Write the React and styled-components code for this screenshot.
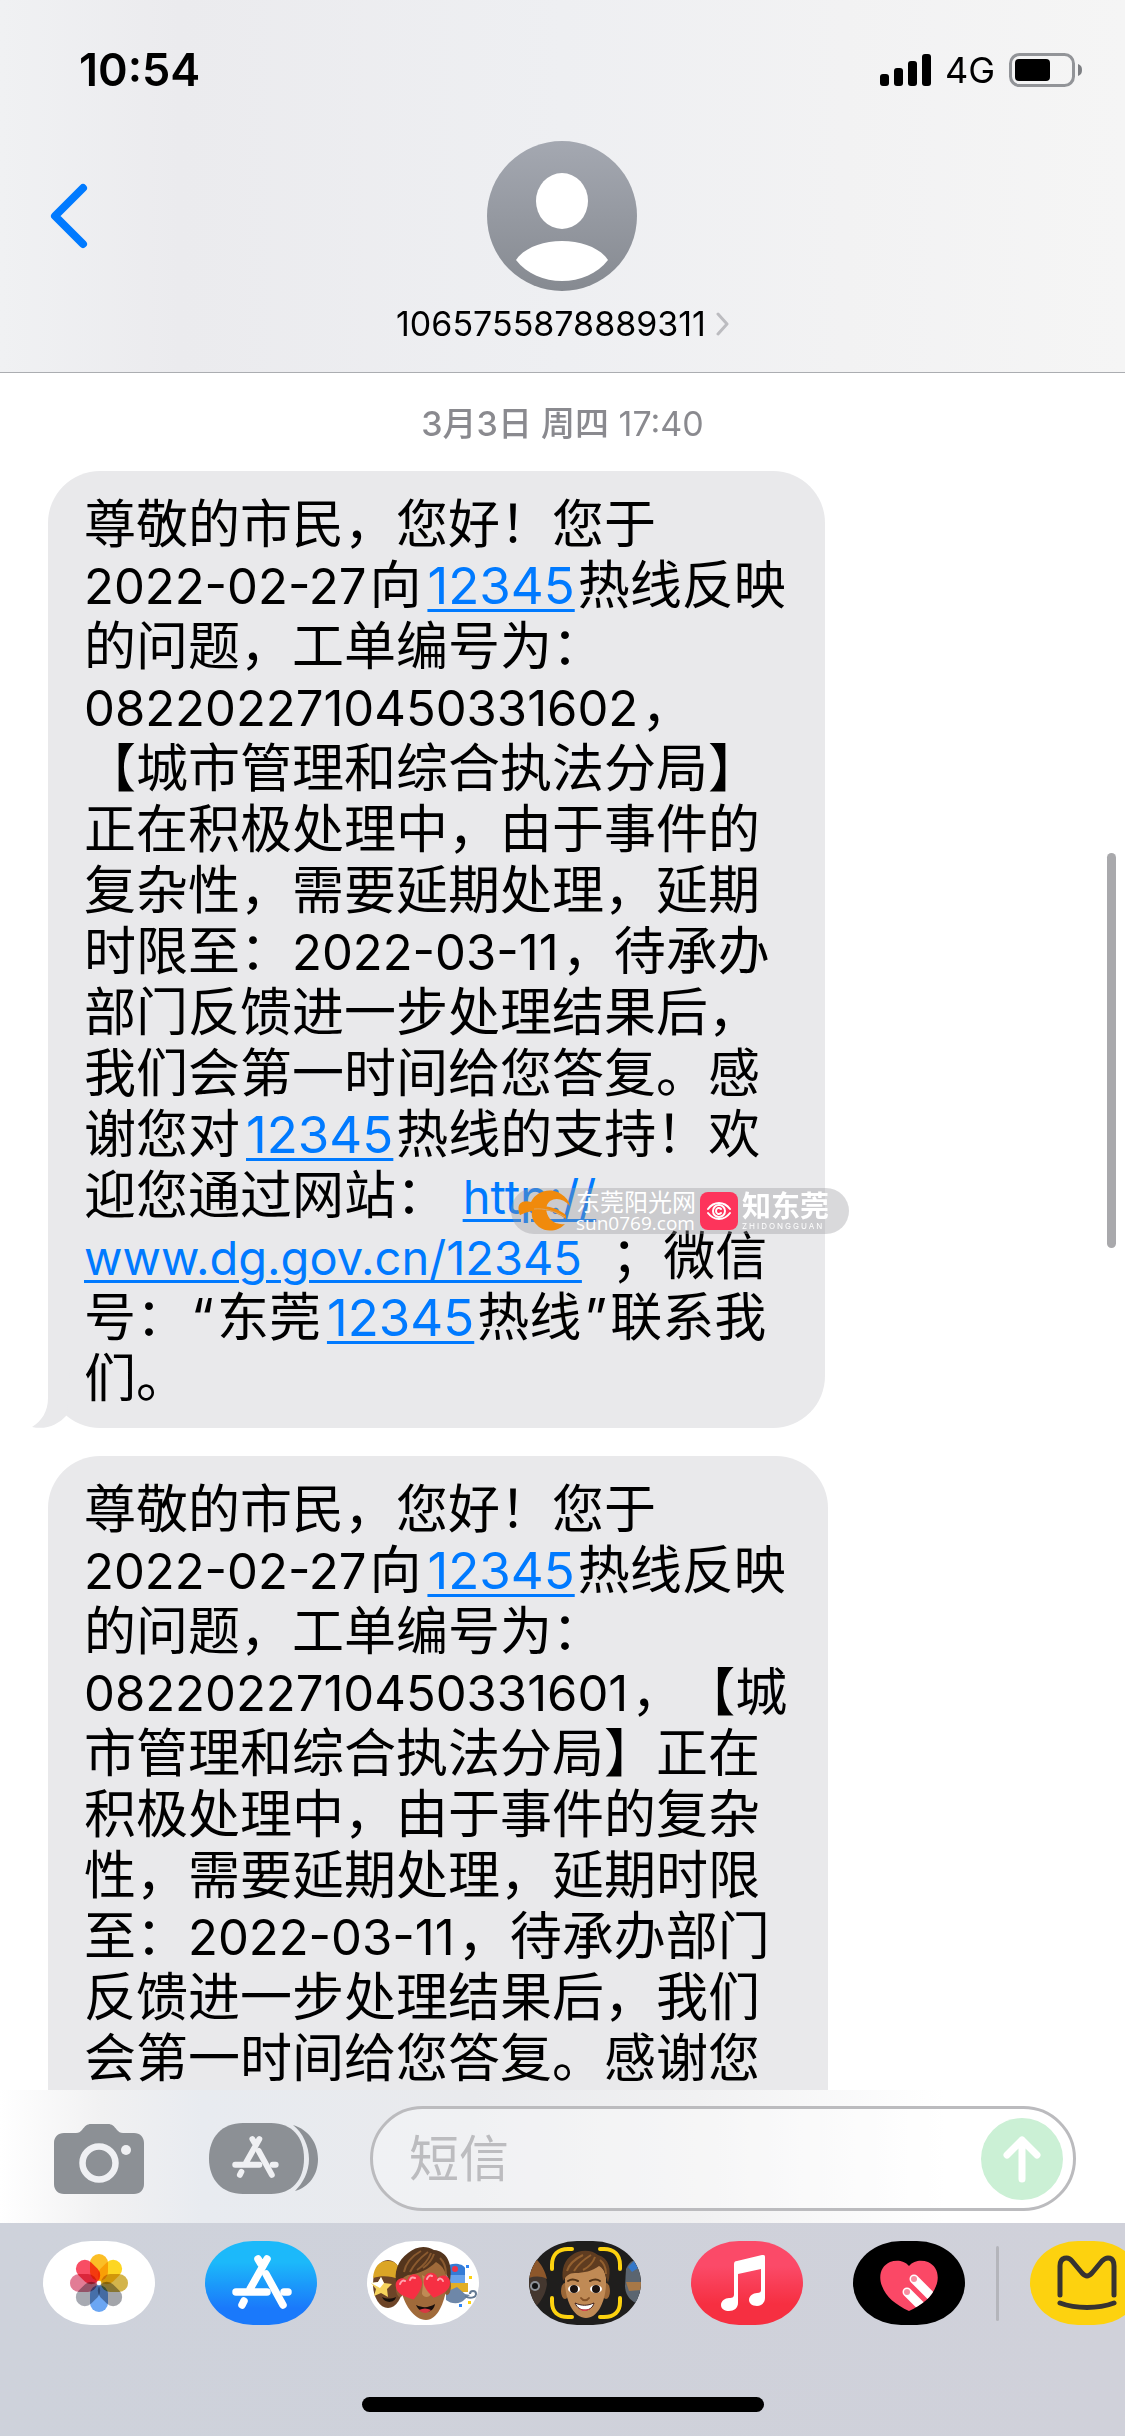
import React from 'react'
import styled, { createGlobalStyle } from 'styled-components'

const LINK = 'http://www.dg.gov.cn/12345'

const App = () => {
    return (
        <Page>
            <GlobalStyle />
            <Header>
                <StatusBar>
                    <Clock>10:54</Clock>
                    <StatusIcons>
                        <SignalIcon />
                        <Network>4G</Network>
                        <BatteryIcon />
                    </StatusIcons>
                </StatusBar>
                <NavBar>
                    <BackButton aria-label="返回">
                        <svg width="38" height="66" viewBox="0 0 38 66" fill="none" stroke="#007aff" strokeWidth="8" strokeLinecap="round" strokeLinejoin="round">
                            <path d="M33 5 5 33l28 28" />
                        </svg>
                    </BackButton>
                    <Contact>
                        <Avatar />
                        <ContactName>
                            1065755878889311
                            <svg width="13" height="24" viewBox="0 0 13 24" fill="none" stroke="#bcbcc0" strokeWidth="3" strokeLinecap="round" strokeLinejoin="round">
                                <path d="m2 2 9 10-9 10" />
                            </svg>
                        </ContactName>
                    </Contact>
                </NavBar>
            </Header>

            <Thread>
                <DateLine><strong>3月3日 周四</strong> 17:40</DateLine>
                <Bubble>
                    尊敬的市民，您好！您于<br />
                    <Latin>2022-02-27</Latin>向<HotLine href="tel:12345">12345</HotLine>热线反映<br />
                    的问题，工单编号为：<br />
                    <Latin>0822022710450331602</Latin>，<br />
                    【城市管理和综合执法分局】<br />
                    正在积极处理中，由于事件的<br />
                    复杂性，需要延期处理，延期<br />
                    时限至：<Latin>2022-03-11</Latin>，待承办<br />
                    部门反馈进一步处理结果后，<br />
                    我们会第一时间给您答复。感<br />
                    谢您对<HotLine href="tel:12345">12345</HotLine>热线的支持！欢<br />
                    迎您通过网站： <WebLink href={LINK}>http://<br />www.dg.gov.cn/12345</WebLink>&nbsp; ；微信<br />
                    号：<Quote>“</Quote>东莞<HotLine href="tel:12345">12345</HotLine>热线<Quote>”</Quote>联系我<br />
                    们。
                    <Tail viewBox="0 0 44 60" aria-hidden="true">
                        <path d="M16 0v30C16 43 10 53 0 59c14 3 26-2 35-12l3-47z" fill="#e9e9eb" />
                    </Tail>
                    <Watermark />
                </Bubble>
                <Bubble $cut>
                    尊敬的市民，您好！您于<br />
                    <Latin>2022-02-27</Latin>向<HotLine href="tel:12345">12345</HotLine>热线反映<br />
                    的问题，工单编号为：<br />
                    <Latin>0822022710450331601</Latin>，【城<br />
                    市管理和综合执法分局】正在<br />
                    积极处理中，由于事件的复杂<br />
                    性，需要延期处理，延期时限<br />
                    至：<Latin>2022-03-11</Latin>，待承办部门<br />
                    反馈进一步处理结果后，我们<br />
                    会第一时间给您答复。感谢您
                </Bubble>
                <ScrollThumb />
            </Thread>

            <Composer>
                <IconButton aria-label="相机"><CameraIcon /></IconButton>
                <IconButton aria-label="应用抽屉"><DrawerIcon /></IconButton>
                <Field>
                    <TextInput type="text" aria-label="短信" placeholder="短信" />
                    <SendButton aria-label="发送">
                        <svg width="40" height="48" viewBox="0 0 40 48" fill="none" stroke="#fff" strokeWidth="7" strokeLinecap="round" strokeLinejoin="round">
                            <path d="M20 44V5M5 20 20 5l15 15" />
                        </svg>
                    </SendButton>
                </Field>
            </Composer>

            <Tray>
                <AppRow>
                    <AppButton aria-label="照片" $bg="#fff"><PhotosArt /></AppButton>
                    <AppButton aria-label="App Store" $bg="linear-gradient(#1cb9fa 25%, #1a79fb 80%)"><StoreArt /></AppButton>
                    <AppButton aria-label="拟我表情贴纸" $bg="#fff"><StickerArt /></AppButton>
                    <AppButton aria-label="拟我表情" $bg="#1f1e1d"><MemojiArt /></AppButton>
                    <AppButton aria-label="音乐" $bg="linear-gradient(#fb4a68 30%, #f62f41 75%)"><MusicArt /></AppButton>
                    <AppButton aria-label="Digital Touch" $bg="#000"><TouchArt /></AppButton>
                    <Divider />
                    <AppButton aria-label="美团" $bg="#fdd20f"><CatArt /></AppButton>
                </AppRow>
                <HomeIndicator />
            </Tray>
        </Page>
    )
}

export default App

/* ---------- drawings ---------- */

const SignalIcon = () => (
    <svg width="51" height="32" viewBox="0 0 51 32" aria-hidden="true">
        <rect x="0" y="20" width="9" height="12" rx="3" />
        <rect x="14" y="14" width="9" height="18" rx="3" />
        <rect x="28" y="7" width="9" height="25" rx="3" />
        <rect x="42" y="0" width="9" height="32" rx="3" />
    </svg>
)

const BatteryIcon = () => (
    <svg width="74" height="34" viewBox="0 0 74 34" aria-hidden="true">
        <rect x="1.5" y="1.5" width="63" height="31" rx="9" fill="none" stroke="#929498" strokeWidth="3" />
        <rect x="6" y="6" width="35" height="22" rx="4" />
        <path d="M69 11c3 1 4 3 4 6s-1 5-4 6z" fill="#7d7f83" />
    </svg>
)

const Avatar = () => (
    <svg width="150" height="150" viewBox="0 0 150 150" aria-hidden="true">
        <defs>
            <linearGradient id="avatar" x1="0" y1="0" x2="0" y2="1">
                <stop offset="0" stopColor="#a4a8b1" />
                <stop offset="1" stopColor="#868a91" />
            </linearGradient>
        </defs>
        <circle cx="75" cy="75" r="75" fill="url(#avatar)" />
        <ellipse cx="75" cy="60" rx="26" ry="28" fill="#fff" />
        <path d="M29 119c8-12 26-19 46-19s38 7 46 19c-11 14-28 21-46 21s-35-7-46-21z" fill="#fff" />
    </svg>
)

const CameraIcon = () => (
    <svg width="90" height="70" viewBox="0 0 90 70" aria-hidden="true">
        <path d="M10 9h12c3 0 4-1 6-3 3-4 5-6 9-6h17c4 0 6 2 9 6 2 2 3 3 6 3h11c6 0 10 4 10 10v41c0 6-4 10-10 10H10C4 70 0 66 0 60V19C0 13 4 9 10 9z" fill="#8c9095" />
        <circle cx="45" cy="39" r="16.5" fill="none" stroke="#eff0f3" strokeWidth="6.5" />
        <circle cx="72" cy="26" r="5" fill="#eff0f3" />
    </svg>
)

const StoreGlyph = ({ color }) => (
    <g fill="none" stroke={color} strokeWidth="7.5" strokeLinecap="round" strokeLinejoin="round">
        <path d="M62 18 45 48M53 18l3 5M31 51h31M39 60l-2 4M79 51h4" />
        <path d="m61 33 17 31" />
    </g>
)

const DrawerIcon = () => (
    <svg width="110" height="72" viewBox="0 0 110 72" aria-hidden="true">
        <path d="M84 2c16 5 25 18 25 34s-9 28-23 32c8-8 14-19 14-32S94 10 84 2z" fill="#8c9095" />
        <path d="M34 0h28c21 0 33 14 33 35.5S83 71 62 71H34C13 71 0 57 0 35.5S13 0 34 0z" fill="#8c9095" />
        <g transform="translate(2 2) scale(.78)">
            <StoreGlyph color="#eff0f3" />
        </g>
    </svg>
)

const petals = ['#fbb814', '#fdd20f', '#cfae3c', '#9b9da3', '#5e9ef2', '#a0a3ab', '#e0718c', '#f73e57']

const PhotosArt = () => (
    <Art>
        <g transform="translate(56 42)">
            {petals.map((color, i) => (
                <Petal key={color} x="-9" y="-29" width="18" height="27" rx="9" fill={color} fillOpacity=".92" transform={`rotate(${i * 45})`} />
            ))}
            <circle r="2" fill="#fff" />
        </g>
    </Art>
)

const StoreArt = () => (
    <Art>
        <StoreGlyph color="#fff" />
    </Art>
)

const heart = 'M0 12C-8 7-15 1-13-6c1-7 10-8 13-2 3-6 12-5 13 2C15 1 8 7 0 12z'

const StickerArt = () => (
    <Art>
        <ellipse cx="21" cy="43" rx="15" ry="24" fill="#6d4427" />
        <path d="M6 37C7 24 14 19 22 20c6 0 9 4 10 8v10c-8-3-17-4-26-1z" fill="#dba526" />
        <path d="m14 36 3 6 8 1-5 5 1 8-7-4-7 3 2-7-5-6 7-1z" fill="#f6d35c" />
        <path d="m14 36 3 6-4 5-9-5 7-1z" fill="#fff" />
        <path d="M15 56c5 2 9 2 14 0-1 6-11 7-14 0z" fill="#17100c" />
        <path d="M80 26c3-5 16-4 18 1v9H80z" fill="#347bd6" />
        <rect x="80" y="34" width="18" height="9" fill="#68a1e9" />
        <path d="M80 42h21v9H82z" fill="#e2ae25" />
        <path d="M79 51l11-5 8 7 5 1-5 4c-5 6-14 5-19 1z" fill="#6e87a8" />
        <circle cx="88" cy="28" r="3" fill="#ee3347" />
        <path d="M98 55c4 3 11 2 11-2s-6-4-6 0" fill="none" stroke="#637992" strokeWidth="2" />
        <path d="M99 24h3v3h-3zM92 63h3v3h-3z" fill="#2f86f5" />
        <path d="M102 35h3v3h-3zM101 60h3v3h-3z" fill="#fdd20f" />
        <ellipse cx="33" cy="48" rx="4" ry="8" fill="#8a5b32" />
        <ellipse cx="80" cy="45" rx="4" ry="9" fill="#8a5b32" />
        <path d="M33 35c2-12 12-18 25-18 14 0 22 8 22 20 0 19-8 42-21 42-14 0-27-22-26-44z" fill="#a06a3a" />
        <path d="M55 34c2 8 0 15 0 19 2 4 7 4 9 0l-2-15z" fill="#c08b55" />
        <path d="M30 44c-4-12 1-25 11-32C49 5 59 4 67 9c13 1 19 14 16 31l-6-11c-2-4-5-6-8-8-7 7-17 12-28 13-5 2-8 5-11 10z" fill="#54351d" />
        <path d="M37 31c2-10 8-16 17-21M43 31c4-8 10-14 18-20M50 29c6-4 11-9 14-17M56 27c6-4 9-8 11-14M73 17c4 4 6 9 6 16" fill="none" stroke="#8a5a2f" strokeWidth="2" />
        <path d={heart} fill="#f62f43" transform="translate(43 47) rotate(-18)" />
        <path d={heart} fill="#f62f43" transform="translate(69 45) rotate(12)" />
        <path d="M33 43c1-3 3-4 5-3M43 39c1-3 3-3 5-2M60 38c1-3 3-4 5-3M71 39c1-2 4-2 5 1" fill="none" stroke="#ffa3ad" strokeWidth="2" strokeLinecap="round" />
        <path d="M49 64c7 3 12 3 19-1-1 9-14 12-19 1z" fill="#180f0c" />
        <path d="M52 69c4-2 8-2 12 0-4 4-8 4-12 0z" fill="#d83843" />
    </Art>
)

const MemojiArt = () => (
    <Art>
        <path d="M0 42c0-9 3-17 7-24 6 6 10 16 11 25-1 8-5 17-11 22C3 58 0 50 0 42z" fill="#44372f" />
        <path d="M0 37c1-8 4-14 7-19 6 6 9 12 11 20-6-3-12-3-18-1z" fill="#8d572b" />
        <circle cx="6" cy="45" r="5" fill="#8d9197" />
        <circle cx="6" cy="45" r="3" fill="#111" />
        <path d="M97 28c2-5 5-8 9-9 4 7 6 15 6 23 0 7-2 14-5 20-7-3-11-10-11-17z" fill="#5b6570" />
        <path d="M99 26l6-6 4 7-6 4z" fill="#3477c8" />
        <path d="M97 41h15v8l-12 1z" fill="#a77847" />
        <ellipse cx="36" cy="50" rx="4" ry="8" fill="#9b6737" />
        <ellipse cx="77" cy="50" rx="4" ry="8" fill="#9b6737" />
        <path d="M36 36c3-12 12-17 21-17s19 6 20 18c1 20-7 40-20 40S35 58 36 36z" fill="#c08a55" />
        <path d="M34 40c-2-13 2-21 9-26 8-6 20-5 26 0 11 3 14 14 10 28l-4-12c-2-3-3-4-5-5-7 5-15 7-24 7-6 0-9 3-12 8z" fill="#5f3c20" />
        <path d="M38 30c2-7 8-12 16-16M45 30c4-7 9-11 17-16M54 29c6-3 10-7 12-13M71 19c4 3 6 8 6 14" fill="none" stroke="#93602f" strokeWidth="2" />
        <path d="M39 40c3-2 6-2 10 0M61 40c4-2 7-2 10 0" fill="none" stroke="#543417" strokeWidth="2" strokeLinecap="round" />
        <ellipse cx="45" cy="48" rx="6" ry="4" fill="#fff" />
        <ellipse cx="67" cy="48" rx="6" ry="4" fill="#fff" />
        <circle cx="45" cy="48" r="4" fill="#1c1310" />
        <circle cx="67" cy="48" r="4" fill="#1c1310" />
        <path d="M52 57c2 3 6 3 8 0" fill="none" stroke="#865228" strokeWidth="2" strokeLinecap="round" />
        <path d="M46 62c7 3 12 3 19 0-2 9-15 10-19 0z" fill="#fff" stroke="#40201a" strokeWidth="1" />
        <path d="M49 67c4 2 9 2 13 0-4 4-9 4-13 0z" fill="#e03b4b" />
        <g fill="none" stroke="#fdd20f" strokeWidth="4" strokeLinecap="round">
            <path d="M23 28v-4C23 14 29 8 39 8h4" />
            <path d="M71 8h4c10 0 16 6 16 16v4" />
            <path d="M23 57v4c0 10 6 15 16 15h4" />
            <path d="M71 76h4c10 0 16-5 16-15v-4" />
        </g>
    </Art>
)

const MusicArt = () => (
    <Art>
        <path d="M43 23c0-2 1-3 3-3l25-6c2 0 3 0 3 2v41c0 5-4 8-8 8-5 0-8-3-8-6 0-4 4-7 8-7 3 0 4-1 4-3V28l-23 5v29c0 5-4 8-9 8-4 0-8-2-8-6s4-7 8-7 5-1 5-4z" fill="#fff" />
    </Art>
)

const TouchArt = () => (
    <Art>
        <defs>
            <clipPath id="touch-heart">
                <path d="M56 25c5-6 13-6 19-4 9 4 12 14 8 24-4 11-14 19-27 25-13-6-23-14-27-25-4-10-1-20 8-24 6-2 14-2 19 4z" />
            </clipPath>
        </defs>
        <g clipPath="url(#touch-heart)">
            <rect x="24" y="16" width="64" height="58" fill="#fb4866" />
            <path d="m61 38 24 24M54 51l20 20" stroke="#fff" strokeWidth="9" strokeLinecap="round" />
            <circle cx="61" cy="38" r="3" fill="#f78da0" />
            <circle cx="54" cy="51" r="3" fill="#f78da0" />
        </g>
    </Art>
)

const CatArt = () => (
    <Art>
        <g fill="none" stroke="#373331" strokeWidth="5" strokeLinecap="round" strokeLinejoin="round">
            <path d="M30 54V25c0-9 8-10 12-5l10 12c4 4 6 4 10 0l10-12c5-5 12-4 12 5v29" />
            <path d="M30 62c16 6 38 6 54 0" />
        </g>
    </Art>
)

const Watermark = () => (
    <WatermarkPill>
        <svg width="54" height="42" viewBox="0 0 54 42" aria-hidden="true">
            <path d="M13 12C18 1 33-3 43 4c5 3 8 7 9 12-6-7-14-9-20-5-5 4-5 11 0 18 4 4 9 6 15 5-6 7-18 9-26 3-6-5-8-10-7-16-5-2-9-1-12 4-4-9 0-16 11-13z" fill="#f08a0c" />
            <path d="M2 22c14-9 33-8 46 3v4C34 19 20 17 2 25z" fill="#f08a0c" />
            <path d="M16 19c10-1 21 2 31 8" fill="none" stroke="#d9a668" strokeWidth="1" />
        </svg>
        <SiteName>
            <SiteTitle>东莞阳光网</SiteTitle>
            <SiteUrl>sun0769.com</SiteUrl>
        </SiteName>
        <svg width="38" height="38" viewBox="0 0 38 38" aria-hidden="true">
            <rect width="38" height="38" rx="8" fill="#fd345b" />
            <g fill="none" stroke="#fff" strokeWidth="2" strokeLinecap="round">
                <path d="M8 17c6-8 16-8 22 0M8 21c6 8 16 8 22 0" />
                <circle cx="19" cy="19" r="6" />
                <path d="M21 17c-2-2-5-1-5 2s3 4 5 2" />
            </g>
        </svg>
        <SiteName>
            <BrandTitle>知东莞</BrandTitle>
            <BrandSub>ZHIDONGGUAN</BrandSub>
        </SiteName>
    </WatermarkPill>
)

/* ---------- styles ---------- */

const GlobalStyle = createGlobalStyle`
* {
    box-sizing: border-box;
}
body {
    margin: 0;
    background: #fff;
    color: #000;
    font-family: Inter, "Noto Sans CJK SC", sans-serif;
}
button {
    border: 0;
    padding: 0;
    background: none;
    font: inherit;
    color: inherit;
    cursor: pointer;
}
svg {
    display: block;
    flex: none;
}
`

const Page = styled.div`
display: flex;
flex-direction: column;
height: 100vh;
overflow: hidden;
`

const Header = styled.header`
flex: none;
background: linear-gradient(90deg, #f0f1f3, #ebebee 16%, #eeeff2 50%, #f2f2f3 75%, #f5f5f5);
border-bottom: 1px solid #abadb1;
padding-bottom: 28px;
`

const StatusBar = styled.div`
display: flex;
align-items: center;
justify-content: space-between;
height: 141px;
padding: 0 42px 2px 79px;
`

const Clock = styled.time`
font-size: 45px;
font-weight: 600;
line-height: 60px;
`

const StatusIcons = styled.div`
display: flex;
align-items: center;
gap: 14px;
`

const Network = styled.span`
font-size: 36px;
line-height: 40px;
`

const NavBar = styled.nav`
display: grid;
grid-template-columns: 1fr auto 1fr;
`

const BackButton = styled.button`
display: flex;
align-items: center;
height: 150px;
padding-left: 50px;
`

const Contact = styled.button`
display: flex;
flex-direction: column;
align-items: center;
gap: 13px;
`

const ContactName = styled.span`
display: flex;
align-items: center;
gap: 10px;
font-size: 34px;
line-height: 40px;
`

const Thread = styled.main`
position: relative;
flex: 1;
min-height: 0;
overflow: hidden;
display: flex;
flex-direction: column;
align-items: flex-start;
padding-left: 48px;
`

const DateLine = styled.p`
align-self: stretch;
margin: 30px 48px 27px 0;
text-align: center;
color: #8a8a8f;
font-size: 34px;
line-height: 41px;
strong {
    font-weight: 500;
}
`

const Bubble = styled.div`
position: relative;
flex: ${({ $cut }) => ($cut ? '1 0 auto' : 'none')};
width: ${({ $cut }) => ($cut ? '780px' : '777px')};
max-width: 90%;
margin-bottom: ${({ $cut }) => ($cut ? '0' : '28px')};
padding: 23px 0 ${({ $cut }) => ($cut ? '0' : '19px')} 36px;
border-radius: ${({ $cut }) => ($cut ? '52px 52px 0 0' : '52px')};
background: #e9e9eb;
font-size: 52px;
line-height: 61px;
white-space: nowrap;
text-spacing-trim: space-all;
`

const Latin = styled.span`
margin-right: 3px;
font-size: 49px;
line-height: 1;
`

const Quote = styled.span`
margin: 0 3px;
line-height: 1;
`

const WebLink = styled.a`
color: #007aff;
font-size: 47px;
line-height: 1;
text-decoration: underline;
text-decoration-thickness: 3px;
text-underline-offset: 5px;
`

const HotLine = styled(WebLink)`
margin: 0 3px 0 6px;
font-size: 51px;
`

const Tail = styled.svg`
position: absolute;
left: -16px;
bottom: 0;
width: 44px;
height: 60px;
`

const ScrollThumb = styled.div`
position: absolute;
top: 480px;
right: 9px;
width: 9px;
height: 395px;
border-radius: 5px;
background: #a9a9ac;
`

const WatermarkPill = styled.div`
position: absolute;
left: 463px;
top: 717px;
display: flex;
align-items: center;
gap: 4px;
width: 338px;
height: 46px;
padding-left: 7px;
border-radius: 23px;
background: rgba(150, 150, 155, 0.36);
color: #fff;
`

const SiteName = styled.div`
display: flex;
flex-direction: column;
width: 122px;
`

const SiteTitle = styled.span`
font-size: 24px;
line-height: 24px;
`

const SiteUrl = styled.span`
font-family: "Open Sans", sans-serif;
font-size: 19px;
line-height: 16px;
`

const BrandTitle = styled.span`
font-size: 29px;
font-weight: 700;
line-height: 30px;
`

const BrandSub = styled.span`
font-size: 8px;
line-height: 8px;
letter-spacing: 2px;
`

const Composer = styled.form`
flex: none;
display: flex;
align-items: center;
height: 133px;
padding: 4px 49px 0 54px;
background: linear-gradient(90deg, #fff 0, #f1f1f2 9%, #e8ebf0 18%, #e9eaed 42%, #f1f1f2 62%, #fff 84%);
`

const IconButton = styled.button.attrs({ type: 'button' })`
flex: none;
margin-right: 65px;
& + & {
    margin-right: 51px;
}
`

const Field = styled.div`
flex: 1;
min-width: 0;
display: flex;
align-items: center;
height: 105px;
padding: 0 10px 0 36px;
border: 3px solid #bbbbbe;
border-radius: 53px;
background: rgba(255, 255, 255, 0.35);
`

const TextInput = styled.input`
flex: 1;
min-width: 0;
border: 0;
outline: 0;
padding: 2px 0 0;
background: none;
font-family: inherit;
font-size: 50px;
line-height: 61px;
&::placeholder {
    color: #bcbcbf;
    opacity: 1;
}
`

const SendButton = styled.button.attrs({ type: 'button' })`
flex: none;
display: flex;
align-items: center;
justify-content: center;
width: 82px;
height: 82px;
border-radius: 50%;
background: #cbf0d5;
`

const Tray = styled.footer`
flex: none;
display: flex;
flex-direction: column;
justify-content: space-between;
align-items: center;
height: 213px;
padding: 18px 0 24px;
background: linear-gradient(90deg, #ced2db, #d0d1da);
`

const AppRow = styled.div`
align-self: stretch;
display: flex;
align-items: center;
gap: 50px;
padding-left: 43px;
overflow: hidden;
`

const AppButton = styled.button`
flex: none;
width: 112px;
height: 84px;
border-radius: 48px / 42px;
background: ${({ $bg }) => $bg};
overflow: hidden;
`

const Art = styled.svg.attrs({ viewBox: '0 0 112 84', 'aria-hidden': true })`
width: 112px;
height: 84px;
`

const Petal = styled.rect`
mix-blend-mode: multiply;
`

const Divider = styled.span`
flex: none;
width: 3px;
height: 75px;
margin: 0 -19px;
border-radius: 2px;
background: #b4b5bb;
`

const HomeIndicator = styled.div`
width: 402px;
height: 15px;
border-radius: 8px;
background: #000;
`
